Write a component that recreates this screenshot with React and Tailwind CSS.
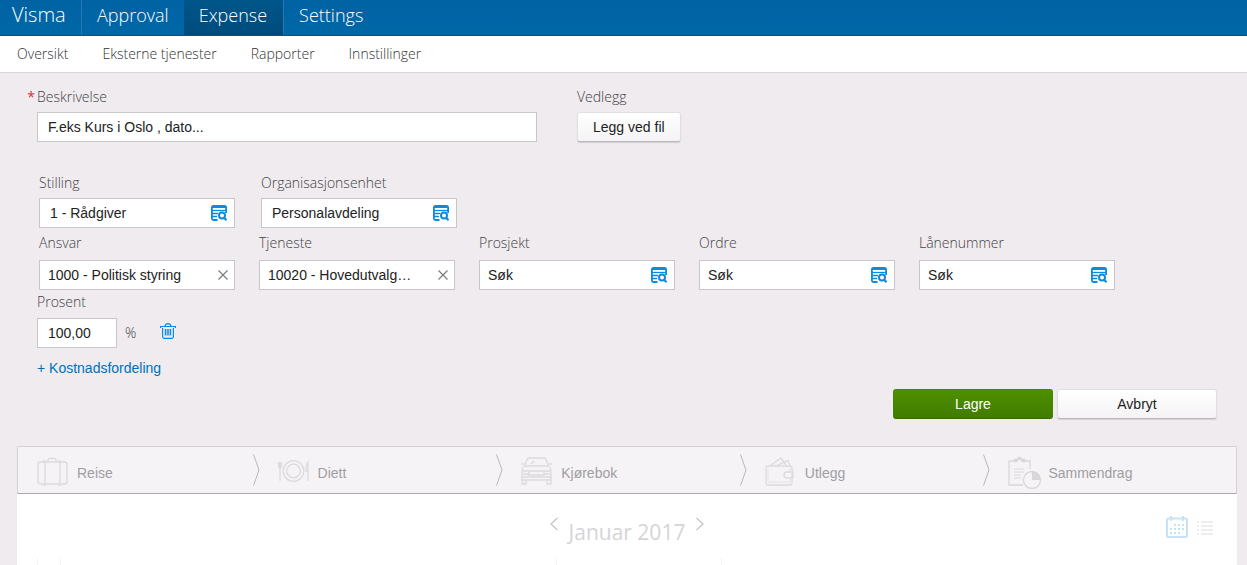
import React, { useState } from 'react';

const tabs = ['Approval', 'Expense', 'Settings'];
const menu = ['Oversikt', 'Eksterne tjenester', 'Rapporter', 'Innstillinger'];

const LookupIcon = () => (
  <svg className="w-4 h-4" viewBox="0 0 16 16" fill="none" stroke="#0a8be0" strokeWidth="1.8">
    <path d="M15.1 8V2.5Q15.1 1 13.5 1H2.5Q0.9 1 0.9 2.5V13.5Q0.9 15 2.5 15H6.5" />
    <path d="M1 2H15" strokeWidth="2" />
    <path d="M1 5.5H15" strokeWidth="1.3" />
    <path d="M1 8.5H7M1 11.5H6" strokeWidth="1.3" />
    <circle cx="11" cy="10.5" r="3" strokeWidth="2" />
    <path d="M13 12.7L15.5 15.2" strokeWidth="2" />
  </svg>
);

const ClearIcon = () => (
  <svg className="w-[10px] h-[10px]" viewBox="0 0 10 10" fill="none" stroke="#7d7b80" strokeWidth="1.2">
    <path d="M0.5 0.5L9.5 9.5M9.5 0.5L0.5 9.5" />
  </svg>
);

const TrashIcon = () => (
  <svg className="w-4 h-4" viewBox="0 0 16 16" fill="none" stroke="#0a8be0" strokeWidth="1.2">
    <path d="M0 3.5H16M0.6 3V5M15.4 3V5" />
    <path d="M5 3.5Q5.5 0.7 8 0.7T11 3.5" />
    <path d="M2.6 5V13.5Q2.6 15.3 4.2 15.3H11.8Q13.4 15.3 13.4 13.5V5" />
    <path d="M5.6 6V12.5M8 6V12.5M10.4 6V12.5" strokeWidth="1.5" />
  </svg>
);

const SuitcaseIcon = () => (
  <svg className="w-[32px] h-[32px]" viewBox="0 0 32 32" fill="none" stroke="#dcdadd" strokeWidth="1.4">
    <rect x="1" y="6" width="29" height="22" rx="2.5" />
    <path d="M8 6V28M23 6V28" />
    <path d="M11 6V4Q11 2.5 12.5 2.5H17.5Q19 2.5 19 4V6M6 5H9M21 5H24M6 29H9M21 29H24" />
  </svg>
);

const PlateIcon = () => (
  <svg className="w-[32px] h-[32px]" viewBox="0 0 32 32" fill="none" stroke="#dcdadd" strokeWidth="1.3">
    <circle cx="15.5" cy="15" r="10.3" />
    <circle cx="15.5" cy="15" r="6.8" />
    <path d="M0.7 6V10Q0.7 12 2 12T3.5 10V6M2 6V25" />
    <path d="M30 25V6Q28 8 28 15H30" />
  </svg>
);

const CarIcon = () => (
  <svg className="w-[32px] h-[32px]" viewBox="0 0 32 32" fill="none" stroke="#dcdadd" strokeWidth="1.3">
    <path d="M3 11L6.5 2.8Q7 2 8 2H23Q24 2 24.7 2.8L28 11" />
    <path d="M0 8H3M28 8H31M3 10H28M2 11Q1 14 1 17V24H30V17Q30 14 29 11" />
    <path d="M2 15H8V18H2M29 15H23V18H29M8 15H23V19H8ZM1 21H30" />
    <path d="M1 24V28H5V25M26 25V28H30V24M10 8L13 5" />
  </svg>
);

const WalletIcon = () => (
  <svg className="w-[32px] h-[32px]" viewBox="-1 0 32 32" fill="none" stroke="#dcdadd" strokeWidth="1.3">
    <path d="M3 10H24Q26 10 26 12V27Q26 29 24 29H2Q0 29 0 27V12Q0 10 3 10Z" />
    <path d="M4 10L15 2L20 9M10 10L22 4.5L24 10" />
    <path d="M27 16H21Q18 16 18 19T21 22H27Z" />
    <path d="M2 13V26H24V23M24 15V12" strokeWidth="0.6" />
  </svg>
);

const SummaryIcon = () => (
  <svg className="w-[34px] h-[34px]" viewBox="0 0 34 34" fill="none" stroke="#d9d7da" strokeWidth="1.3">
    <path d="M15 30H1V6H6M17 6H22V14" />
    <path d="M6 7V4H9Q9.5 2 11.5 2T14 4H17V7H14Q13 4.5 11.5 4.5T9 7Z" fill="#d9d7da" strokeWidth="0.6" />
    <path d="M6 14H16M6 17H16M6 20H13M6 23H13" strokeWidth="0.9" />
    <circle cx="24" cy="25" r="8.5" fill="#f6f3f6" />
    <path d="M24 25V16.5A8.5 8.5 0 0 1 32.5 25Z" fill="#d9d7da" stroke="none" />
  </svg>
);

const CalendarIcon = () => (
  <svg className="w-[22px] h-[22px]" viewBox="0 0 22 22" fill="none" stroke="#c6e3f6" strokeWidth="2">
    <rect x="1" y="2.5" width="20" height="18.5" rx="1.5" />
    <path d="M5 0V5M17 0V5" />
    <path d="M8 9H18M4 13H18M4 17H14" strokeDasharray="2 2" />
  </svg>
);

const ListIcon = () => (
  <svg className="w-4 h-4" viewBox="0 0 16 16" fill="none" stroke="#f1ecef" strokeWidth="1.8">
    <path d="M0 2H2M4 2H16M0 6H2M4 6H16M0 10H2M4 10H16M0 14H2M4 14H16" />
  </svg>
);

const steps = [
  { label: 'Reise', Icon: SuitcaseIcon },
  { label: 'Diett', Icon: PlateIcon },
  { label: 'Kjørebok', Icon: CarIcon },
  { label: 'Utlegg', Icon: WalletIcon },
  { label: 'Sammendrag', Icon: SummaryIcon },
];

const labelClass = "block font-['Open_Sans',sans-serif] font-light text-sm leading-5 text-[#444246]";
const inputClass = 'h-[30px] border border-[#c8c6ca] bg-white text-sm text-[#222] placeholder:text-[#222] placeholder:opacity-100 outline-none';
const whiteButton = 'h-[30px] rounded-[3px] bg-gradient-to-b from-white to-[#f5f3f5] text-sm text-[#222] border border-[#e2dfe2] border-b-[#bbb8bb] shadow-[0_1px_1px_rgba(0,0,0,0.12)]';

const Field = ({ id, label, value, placeholder, clearable, wide }) => {
  const [text, setText] = useState(value || '');

  return (
    <div className="w-[196px]">
      <label htmlFor={id} className={labelClass}>{label}</label>
      <div className={wide ? 'relative mt-[5px]' : 'relative mt-[7px]'}>
        <input
          id={id}
          type="text"
          value={text}
          placeholder={placeholder}
          onChange={(e) => setText(e.target.value)}
          className={`${inputClass} block w-full pr-10 ${wide ? 'pl-[10px]' : 'pl-2'}`}
        />
        <button
          type="button"
          aria-label={clearable ? `Fjern ${label}` : `Søk ${label}`}
          onClick={() => clearable && setText('')}
          className={`absolute inset-y-0 flex items-center ${clearable ? 'right-[7px]' : 'right-2'}`}
        >
          {clearable ? <ClearIcon /> : <LookupIcon />}
        </button>
      </div>
    </div>
  );
};

const App = () => {
  const [active, setActive] = useState('Expense');

  return (
    <div className="flex flex-col min-h-screen bg-[#efebee] font-['Liberation_Sans',Arial,sans-serif] text-[#222]">
      {/* Top bar */}
      <header className="flex h-9 bg-gradient-to-b from-[#0062a3] to-[#0068a8] border-b border-[#00508a] font-['Open_Sans',sans-serif] font-light text-white">
        <a href="#" className="flex w-[82px] pl-3 text-xl leading-[30px] border-r border-[#2479b3]">Visma</a>
        {tabs.map((tab) => (
          <button
            key={tab}
            type="button"
            onClick={() => setActive(tab)}
            className={`pl-[15px] text-lg leading-7 pb-[6px] ${tab === active ? 'pr-4 bg-gradient-to-b from-[#00568a] to-[#004b7c] border-r border-[#2479b3]' : 'pr-[15px]'}`}
          >
            {tab}
          </button>
        ))}
      </header>

      {/* Sub menu */}
      <nav className="flex h-[37px] pl-[17px] gap-[34px] bg-white border-b border-[#d9d6d9] font-['Open_Sans',sans-serif] font-light text-sm leading-9 text-[#333]">
        {menu.map((item) => (
          <a key={item} href="#">{item}</a>
        ))}
      </nav>

      <form className="px-[30px] pt-[14px]" onSubmit={(e) => e.preventDefault()}>
        <div className="flex gap-10 pl-[7px]">
          <div className="w-[500px]">
            <label htmlFor="description" className={`${labelClass} relative`}>
              <span className="absolute right-full pr-[2px] font-normal text-[#d8323c]">*</span>
              Beskrivelse
            </label>
            <input
              id="description"
              type="text"
              placeholder="F.eks Kurs i Oslo , dato..."
              className={`${inputClass} block w-full mt-[5px] px-[10px]`}
            />
          </div>
          <div>
            <span className={labelClass}>Vedlegg</span>
            <button type="button" className={`${whiteButton} mt-[5px] px-[15px]`}>Legg ved fil</button>
          </div>
        </div>

        <div className="flex gap-[26px] pl-[9px] mt-[31px]">
          <Field id="position" label="Stilling" value="1 - Rådgiver" wide />
          <Field id="unit" label="Organisasjonsenhet" value="Personalavdeling" wide />
        </div>

        <div className="flex flex-wrap gap-x-6 pl-[9px] mt-[5px]">
          <Field id="responsibility" label="Ansvar" value="1000 - Politisk styring" clearable />
          <Field id="service" label="Tjeneste" value="10020 - Hovedutvalg…" clearable />
          <Field id="project" label="Prosjekt" placeholder="Søk" />
          <Field id="order" label="Ordre" placeholder="Søk" />
          <Field id="loan" label="Lånenummer" placeholder="Søk" />
        </div>

        <div className="pl-[7px] mt-[2px]">
          <label htmlFor="percent" className={labelClass}>Prosent</label>
          <div className="flex items-center mt-[6px]">
            <input id="percent" type="text" defaultValue="100,00" className={`${inputClass} w-20 px-[10px]`} />
            <span className="w-[35px] ml-2 font-['Open_Sans',sans-serif] font-light text-sm text-[#444246]">%</span>
            <button type="button" aria-label="Slett" className="pb-1"><TrashIcon /></button>
          </div>
          <a href="#" className="inline-block mt-[10px] text-sm leading-5 text-[#0071b8]">+ Kostnadsfordeling</a>
        </div>

        <div className="flex justify-end gap-1 mt-[9px]">
          <button
            type="submit"
            className="w-40 h-[30px] rounded-[3px] bg-gradient-to-b from-[#4e9000] to-[#417b00] text-sm text-white border border-[#468500] border-b-[#396a00]"
          >
            Lagre
          </button>
          <button type="button" className={`${whiteButton} w-40`}>Avbryt</button>
        </div>
      </form>

      {/* Disabled wizard below the form */}
      <section className="flex flex-col flex-1 ml-[17px] mr-[10px] mt-[27px]">
        <ol className="grid grid-cols-5 h-12 bg-[#f6f3f6] border border-[#d3d1d4] border-b-[#aaa8ab] rounded-t-[2px]">
          {steps.map(({ label, Icon }, i) => (
            <li key={label} className={`flex items-center ${i === 0 ? 'pl-[19px]' : 'pl-4'}`}>
              <span className="flex w-10 items-center pt-1"><Icon /></span>
              <span className="flex-1 pt-[6px] text-sm leading-5 text-[#a09ea2]">{label}</span>
              {i < steps.length - 1 && (
                <svg className="w-[7px] h-8 mr-[2px]" viewBox="0 0 7 32" fill="none" stroke="#b9b7ba">
                  <path d="M0.5 0.5L6 16L0.5 31.5" />
                </svg>
              )}
            </li>
          ))}
        </ol>

        <div className="flex flex-col flex-1 bg-white">
          <div className="grid grid-cols-[1fr_auto_1fr] h-16 px-6 pt-[22px]">
            <div className="col-start-2 flex gap-[11px]">
              <button type="button" aria-label="Forrige måned" className="h-4">
                <svg className="w-2 h-[14px]" viewBox="0 0 8 14" fill="none" stroke="#c4c2c5" strokeWidth="1.2">
                  <path d="M7.5 1L1 7L7.5 13" />
                </svg>
              </button>
              <h2 className="font-['Open_Sans',sans-serif] text-[21px] leading-8 text-[#d6d4d7]">Januar 2017</h2>
              <button type="button" aria-label="Neste måned" className="h-4">
                <svg className="w-2 h-[14px]" viewBox="0 0 8 14" fill="none" stroke="#c4c2c5" strokeWidth="1.2">
                  <path d="M0.5 1L7 7L0.5 13" />
                </svg>
              </button>
            </div>
            <div className="flex justify-end items-start gap-[9px]">
              <button type="button" aria-label="Kalender"><CalendarIcon /></button>
              <button type="button" aria-label="Liste" className="pt-1"><ListIcon /></button>
            </div>
          </div>
          <div className="grid grid-cols-[24px_3fr_1fr_3fr] flex-1 mx-5">
            <div className="border-x border-[#f5f4f5]" />
            <div />
            <div className="border-x border-[#f5f4f5]" />
            <div />
          </div>
        </div>
      </section>
    </div>
  );
};

export default App;
